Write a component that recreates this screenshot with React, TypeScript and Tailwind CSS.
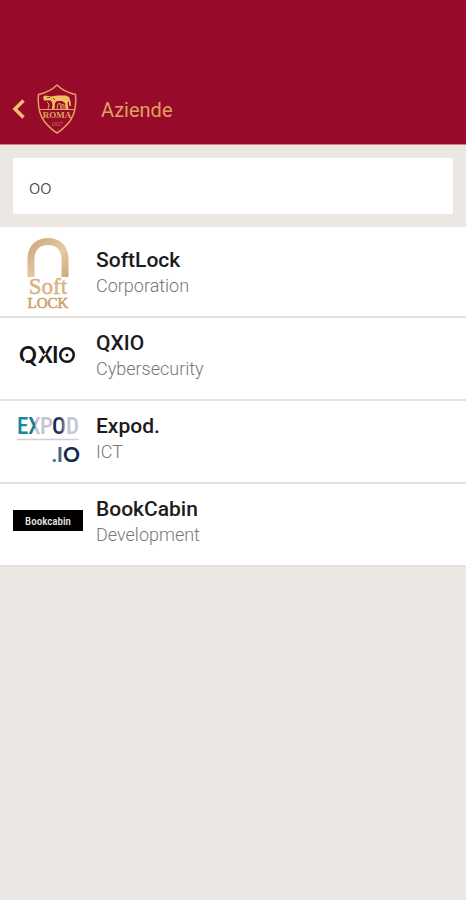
import React from 'react';

interface Company {
  name: string;
  sector: string;
  logo: React.ReactNode;
}

const ClubCrest = () => (
  <svg viewBox="0 0 40 50" className="h-[50px] w-10" fill="none" stroke="#dfa35f" role="img" aria-label="Roma">
    <path
      strokeWidth="1.5"
      strokeLinejoin="round"
      d="M20 1C15 6 8 9 1.5 10.5C.5 22 2 30 7 37C11 42 15 46 20 49C25 46 29 42 33 37C38 30 39.500 22 38.500 10.500C32 9 25 6 20 1Z"
    />
    <path strokeWidth="1" d="M3 25.500H37" />
    <path
      fill="#f0bd62"
      stroke="none"
      d="M6 13L8 11.500L11 12L14 12.500L17 12L20 11.500H29L32 13L33.500 17L34 22L32.500 22L31.500 17L30.500 19L31.500 25H28.500L28 19L25 17H20L18 19L17.500 25H15L15.500 20L14 16.500L11 16.500L7 16.500Z"
    />
    <path stroke="#980a2a" strokeWidth="0.8" d="M10 13.500H13M16 14L18 16" />
    <path strokeWidth="1" d="M20 25L21 20L23 19L24 25M25 25V20L27 21V25M10 18L12 20L11 25" />
    <text x="20" y="34" textAnchor="middle" fill="#dfa35f" stroke="none" className="font-['Liberation_Serif',serif] text-[9px] font-bold">
      ROMA
    </text>
    <text x="20" y="42" textAnchor="middle" fill="#c9804f" stroke="none" className="font-['Liberation_Serif',serif] text-[6px]">
      1927
    </text>
  </svg>
);

const SoftLockLogo = () => (
  <svg viewBox="0 0 70 72" className="h-[72px] w-[70px] overflow-visible" role="img" aria-label="SoftLock">
    <defs>
      <linearGradient id="gold" x1="0" y1="0" x2="1" y2="1">
        <stop offset="0" stopColor="#cba577" />
        <stop offset="0.6" stopColor="#e6c9a6" />
        <stop offset="1" stopColor="#cfa677" />
      </linearGradient>
    </defs>
    <path
      d="M14.500 41V23C14.500 10 23 2 35 2S55.500 10 55.500 23V41H48.500V23C48.500 14 43 9 35 9S21.500 14 21.500 23V41Z"
      fill="url(#gold)"
    />
    <text x="35" y="58" textAnchor="middle" fill="#d8b184" stroke="#d8b184" strokeWidth="0.5" className="font-['Liberation_Serif',serif] text-[23px]">
      Soft
    </text>
    <text x="35" y="72" textAnchor="middle" fill="#cfa06c" stroke="#cfa06c" strokeWidth="0.6" className="font-['Liberation_Serif',serif] text-[15px]">
      LOCK
    </text>
  </svg>
);

const QxioLogo = () => (
  <svg viewBox="0 0 70 28" className="h-7 w-[70px]" role="img" aria-label="QXIO">
    <text y="22" fill="#151515" className="font-[Lato,sans-serif] text-[22px] font-bold">
      <tspan x="6">Q</tspan>
      <tspan x="25">X</tspan>
      <tspan x="39">I</tspan>
    </text>
    <path d="M10 23L14 17M30 15L33 12" stroke="#fff" strokeWidth="1.500" />
    <circle cx="54" cy="14" r="6.750" fill="none" stroke="#151515" strokeWidth="2.500" />
    <circle cx="54" cy="14" r="1.500" fill="#151515" />
  </svg>
);

const ExpodLogo = () => (
  <svg viewBox="0 0 70 56" className="h-14 w-[70px]" role="img" aria-label="Expod.io">
    <defs>
      <linearGradient id="navy" x1="0" y1="0" x2="1" y2="0">
        <stop offset="0" stopColor="#101f3f" />
        <stop offset="0.7" stopColor="#2b4267" />
        <stop offset="1" stopColor="#b5b9c9" />
      </linearGradient>
      <linearGradient id="teal" x1="0" y1="0" x2="1" y2="0">
        <stop offset="0" stopColor="#0f8496" />
        <stop offset="0.5" stopColor="#27728c" />
        <stop offset="0.6" stopColor="#c5c6d2" />
      </linearGradient>
    </defs>
    <g className="font-['Roboto_Condensed',Roboto,sans-serif] text-[23px] font-medium">
      <text x="4" y="24" fill="#17899b">E</text>
      <text x="15" y="24" fill="url(#teal)">X</text>
      <text x="27" y="24" fill="#c5c6d2">P</text>
      <text x="39" y="24" fill="url(#navy)">O</text>
      <text x="53" y="24" fill="#c5c6d2">D</text>
    </g>
    <path d="M4 29.500H66" stroke="#cfd0d5" strokeWidth="1.500" />
    <text x="67" y="52" textAnchor="end" className="font-[Lato,sans-serif] text-[21px] font-bold">
      <tspan fill="#2f7f96">.</tspan>
      <tspan fill="#456789">I</tspan>
      <tspan fill="#142a4a">O</tspan>
    </text>
  </svg>
);

const BookCabinLogo = () => (
  <svg viewBox="0 0 70 21" className="h-[21px] w-[70px]" role="img" aria-label="BookCabin">
    <rect width="70" height="21" fill="#000" />
    <text x="35" y="15" textAnchor="middle" fill="#e8e8e8" className="font-['Roboto_Condensed',Roboto,sans-serif] text-[11px] font-medium">
      Bookcabin
    </text>
  </svg>
);

const companies: Company[] = [
  { name: 'SoftLock', sector: 'Corporation', logo: <SoftLockLogo /> },
  { name: 'QXIO', sector: 'Cybersecurity', logo: <QxioLogo /> },
  { name: 'Expod.', sector: 'ICT', logo: <ExpodLogo /> },
  { name: 'BookCabin', sector: 'Development', logo: <BookCabinLogo /> },
];

const CompanyRow = ({ company }: { company: Company }) => (
  <li className="flex h-[83px] items-center gap-[13px] border-b-2 border-[#e3e2e1] px-[13px] first:h-[91px] first:pt-2">
    <div className="flex w-[70px] shrink-0 items-center justify-center pb-2">{company.logo}</div>
    <div className="pb-[6px]">
      <h2 className="text-[21px] leading-[26px] font-medium text-[#1c1c1c]">{company.name}</h2>
      <p className="text-[18px] leading-[25px] font-light text-[#777]">{company.sector}</p>
    </div>
  </li>
);

const App = () => {
  const [query, setQuery] = React.useState('oo');

  return (
    <div className="min-h-screen bg-[#ebe8e4] font-[Roboto,sans-serif]">
      <header className="flex items-center border-b border-[#dc7f7c] bg-[#980a2a] pt-[84px] pb-[10px] pl-[11px]">
        <button type="button" aria-label="Indietro" className="mr-3">
          <svg viewBox="0 0 14 20" className="h-5 w-[14px]" fill="none" stroke="#f0bd72" strokeWidth="3.500">
            <path d="M12.500 1.500L4 10L12.500 18.500" />
          </svg>
        </button>
        <ClubCrest />
        <h1 className="ml-6 pt-[2px] text-[20px] text-[#dfa060]">Aziende</h1>
      </header>
      <div className="px-[13px] py-[13px]">
        <input
          type="text"
          aria-label="Cerca azienda"
          value={query}
          onChange={(e) => setQuery(e.target.value)}
          className="block h-14 w-full rounded-xs bg-white px-4 pt-[2px] text-[20px] font-light text-[#444] outline-none"
        />
      </div>
      <ul className="bg-white">
        {companies.map((company) => (
          <CompanyRow key={company.name} company={company} />
        ))}
      </ul>
    </div>
  );
};

export default App;
